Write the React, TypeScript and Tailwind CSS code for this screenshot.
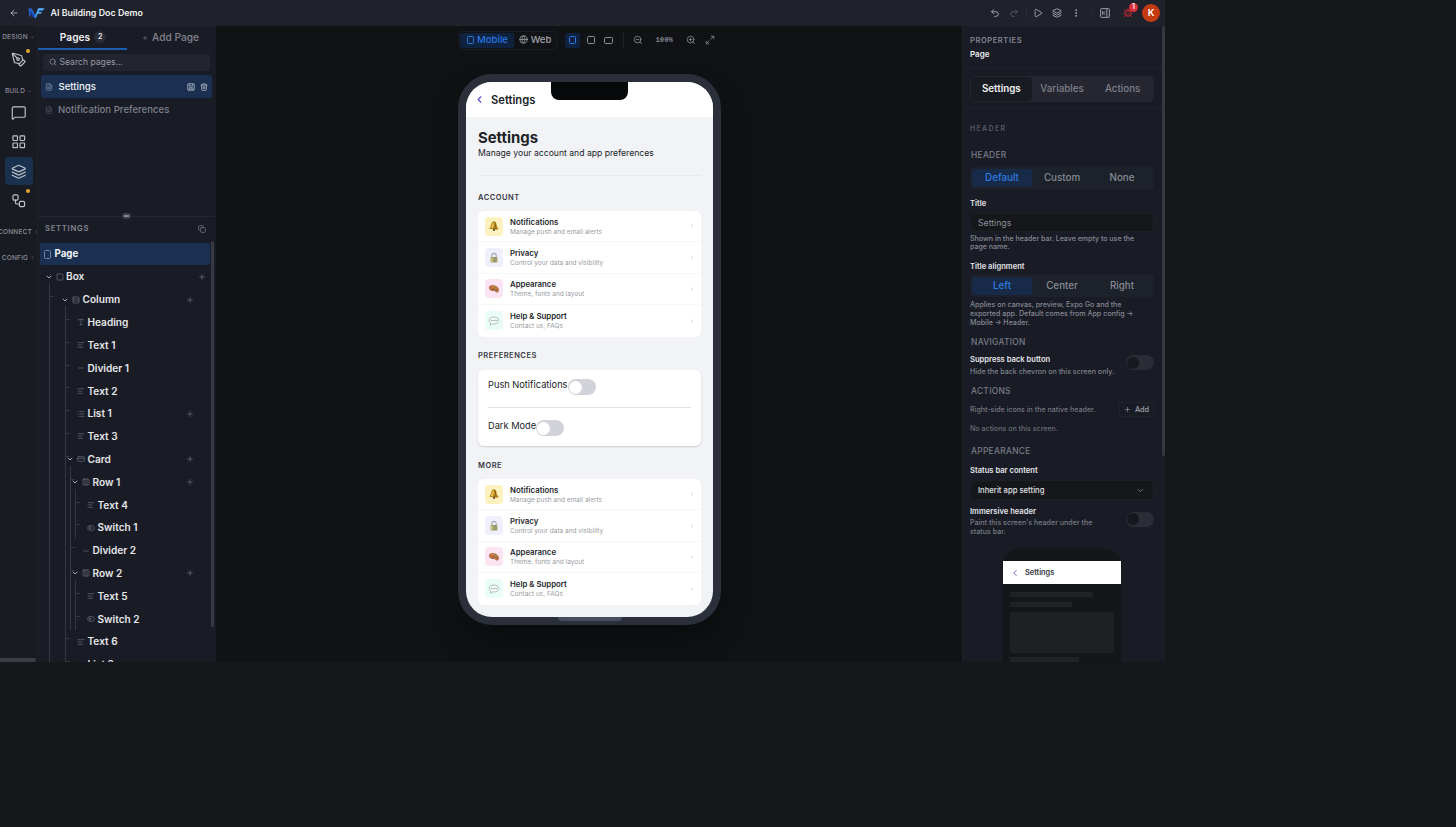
import type { ReactNode } from 'react';
import {
  AlignLeft,
  ArrowLeft,
  Bug,
  ChevronDown,
  ChevronLeft,
  ChevronRight,
  Columns3,
  Copy,
  CreditCard,
  EllipsisVertical,
  FileText,
  Globe,
  Layers,
  LayoutGrid,
  List,
  Maximize2,
  MessageSquare,
  Minus,
  PenTool,
  Play,
  Plus,
  Redo2,
  Rows3,
  Search,
  Square,
  ToggleLeft,
  Trash2,
  Type,
  Undo2,
  Workflow,
  ZoomIn,
  ZoomOut,
  type LucideIcon,
} from 'lucide-react';

type Node = {
  name: string;
  depth: number;
  icon: LucideIcon;
  open?: boolean;
  add?: boolean;
  guides: number[];
  tick?: number;
};

// Guides are the x offsets of the vertical lines that pass through a row
const nodes: Node[] = [
  { name: 'Box', depth: 0, icon: Square, open: true, add: true, guides: [] },
  { name: 'Column', depth: 1, icon: Rows3, open: true, add: true, guides: [11], tick: 11 },
  { name: 'Heading', depth: 2, icon: Type, guides: [11, 27], tick: 27 },
  { name: 'Text 1', depth: 2, icon: AlignLeft, guides: [11, 27], tick: 27 },
  { name: 'Divider 1', depth: 2, icon: Minus, guides: [11, 27], tick: 27 },
  { name: 'Text 2', depth: 2, icon: AlignLeft, guides: [11, 27], tick: 27 },
  { name: 'List 1', depth: 2, icon: List, add: true, guides: [11, 27], tick: 27 },
  { name: 'Text 3', depth: 2, icon: AlignLeft, guides: [11, 27], tick: 27 },
  { name: 'Card', depth: 2, icon: CreditCard, open: true, add: true, guides: [11, 27], tick: 27 },
  { name: 'Row 1', depth: 3, icon: Columns3, open: true, add: true, guides: [11, 27, 32], tick: 32 },
  { name: 'Text 4', depth: 4, icon: AlignLeft, guides: [11, 27, 32, 37], tick: 37 },
  { name: 'Switch 1', depth: 4, icon: ToggleLeft, guides: [11, 27, 32, 37], tick: 37 },
  { name: 'Divider 2', depth: 3, icon: Minus, guides: [11, 27, 32], tick: 32 },
  { name: 'Row 2', depth: 3, icon: Columns3, open: true, add: true, guides: [11, 27, 32], tick: 32 },
  { name: 'Text 5', depth: 4, icon: AlignLeft, guides: [11, 27, 32, 37], tick: 37 },
  { name: 'Switch 2', depth: 4, icon: ToggleLeft, guides: [11, 27, 32, 37], tick: 37 },
  { name: 'Text 6', depth: 2, icon: AlignLeft, guides: [11, 27], tick: 27 },
  { name: 'List 2', depth: 2, icon: List, add: true, guides: [11, 27], tick: 27 },
];

const indents = [6.5, 23, 28, 33, 38];

function TreeRow({ node }: { node: Node }) {
  const Icon = node.icon;
  return (
    <div
      className="relative flex h-[22.82px] shrink-0 items-center"
      style={{ paddingLeft: indents[node.depth] }}
    >
      {node.guides.map((x) => (
        <span key={x} className="absolute top-[-5px] bottom-0 w-px bg-[#343741]" style={{ left: x }} />
      ))}
      {node.tick && (
        <span className="absolute top-[8px] h-px w-[5px] bg-[#343741]" style={{ left: node.tick }} />
      )}
      <span className="relative flex w-[11px] shrink-0">
        {node.open && <ChevronDown size={8} strokeWidth={3} className="text-[#a3a7b0]" />}
      </span>
      <Icon size={8} strokeWidth={2} className="mr-[2.5px] shrink-0 text-[#6b6f7a]" />
      <span className="text-[10.1px] font-semibold text-[#e6e7ea]">{node.name}</span>
      {node.add && (
        <Plus
          size={8}
          className={`absolute text-[#74777f] ${node.depth === 0 ? 'left-[160px]' : 'left-[148px]'}`}
        />
      )}
    </div>
  );
}

function Logo() {
  return (
    <svg width="17" height="12" viewBox="0 0 17 12" fill="none">
      <path d="M.5 1.2H3.6L7.2 7.6 10.2 1.2H16.4L14.8 4H11L7.6 10.9H5.7L2.6 5.4V9.4H1.2Z" fill="#245fc4" />
      <path d="M2.6 3.6 6.8 10.9H5.2L2.6 6Z" fill="#123a9c" />
      <path d="M10.2 1.2H16.4L14.8 3.2H11.6L10.6 5H14L12.8 6.8H9.7L7.6 10.9H6.7Z" fill="#54a8ea" />
    </svg>
  );
}

function TopBar() {
  return (
    <header className="flex h-[25.5px] shrink-0 items-center bg-[#20222b]">
      <ArrowLeft size={10} className="ml-[9px] text-[#b9bcc4]" />
      <div className="ml-[9px]">
        <Logo />
      </div>
      <span className="ml-[5.5px] pb-px text-[8.9px] font-semibold text-[#eff0f3]">AI Building Doc Demo</span>
      <div className="ml-auto flex items-center text-[#b3b6be]">
        <Undo2 size={10} className="mr-[9px]" />
        <Redo2 size={10} className="mr-[7px] text-[#5d606a]" />
        <span className="mr-[6px] h-3 w-px bg-[#2a2d35]" />
        <Play size={10} className="mr-[9px]" />
        <Layers size={10} className="mr-[9px]" />
        <EllipsisVertical size={10} className="mr-[11px]" />
        <span className="mr-[7px] h-3 w-px bg-[#262932]" />
        <svg width="10" height="10" viewBox="0 0 24 24" fill="none" stroke="currentColor" strokeWidth="2" className="mr-[13px]">
          <rect x="1.5" y="1.5" width="21" height="21" rx="2" />
          <path d="M16.5 2v20M6.5 7v10M12.5 8l-4 4 4 4" />
        </svg>
        <div className="relative mr-[9px]">
          <Bug size={10} className="text-[#c42a34]" />
          <span className="absolute -top-[5px] left-[6px] flex h-[9px] w-[9px] items-center justify-center rounded-full bg-[#dc2f3c] text-[7px] font-semibold text-white">
            1
          </span>
        </div>
        <div className="mr-[5px] flex h-[18px] w-[18px] items-center justify-center rounded-full bg-[#c43b12] text-[9.6px] font-semibold text-white">
          K
        </div>
      </div>
    </header>
  );
}

function RailLabel({ children, closed = false }: { children: string; closed?: boolean }) {
  const Chevron = closed ? ChevronRight : ChevronDown;
  return (
    <div className="flex h-[10px] items-center justify-center gap-[2px] text-[6.5px] font-medium tracking-[0.2px] whitespace-nowrap text-[#8d9099]">
      {children}
      <Chevron size={5} className="shrink-0" />
    </div>
  );
}

function RailButton({ icon: Icon, active, dot }: { icon: LucideIcon; active?: boolean; dot?: boolean }) {
  return (
    <div
      className={`relative mx-auto flex h-[28px] w-[28px] shrink-0 items-center justify-center rounded-[4px] text-[#c0c3cb] ${active ? 'bg-[#19304e]' : ''}`}
    >
      <Icon size={15.5} strokeWidth={1.8} />
      {dot && <span className="absolute top-[2.5px] right-[2.5px] h-[4px] w-[4px] rounded-full bg-[#e3a62d]" />}
    </div>
  );
}

function Rail() {
  return (
    <div className="flex w-[38px] shrink-0 flex-col overflow-hidden border-r border-[#1d2026] bg-[#191b23]">
      <div className="mt-[7px]">
        <RailLabel>DESIGN</RailLabel>
      </div>
      <div className="mt-[3.5px]">
        <RailButton icon={PenTool} dot />
      </div>
      <div className="mt-[12px]">
        <RailLabel>BUILD</RailLabel>
      </div>
      <div className="mt-[3px] flex flex-col gap-[1.2px]">
        <RailButton icon={MessageSquare} />
        <RailButton icon={LayoutGrid} />
        <RailButton icon={Layers} active />
        <RailButton icon={Workflow} dot />
      </div>
      <div className="mt-[12px]">
        <RailLabel closed>CONNECT</RailLabel>
      </div>
      <div className="mt-[16px]">
        <RailLabel closed>CONFIG</RailLabel>
      </div>
      <div className="mt-auto h-[4px] w-[36px] rounded-r-full bg-[#3b3e47]" />
    </div>
  );
}

function SaveIcon() {
  return (
    <svg width="8" height="8" viewBox="0 0 16 16" fill="none" stroke="#a9b2c2" strokeWidth="1.7" className="mr-[5px] ml-auto">
      <rect x="1.5" y="1.5" width="13" height="13" rx="1" />
      <path d="M4.5 2v4h7V2M4.5 14V9.5h7V14M8 9.500V14" />
    </svg>
  );
}

function PagesPanel() {
  return (
    <div className="flex w-[178px] shrink-0 flex-col border-r border-[#191b22] bg-[#191b25]">
      <div className="flex h-[24px] shrink-0 text-[10.2px]">
        <div className="flex w-[89px] items-center justify-center gap-[4px] border-b-2 border-[#1a5cb4] pt-[1px] pl-[1px] font-semibold text-[#eceef2]">
          <span>Pages</span>
          <span className="flex h-[12px] w-[12px] items-center justify-center rounded-full bg-[#292c36] text-[7px]">2</span>
        </div>
        <div className="flex flex-1 items-center justify-center gap-[4px] pr-[1px] font-medium text-[#80838c]">
          <Plus size={6} />
          Add Page
        </div>
      </div>
      <div className="mx-[5px] mt-[4px] flex h-[17px] shrink-0 items-center gap-[3px] rounded-[3px] bg-[#22252f] pl-[5.5px] text-[8.6px] text-[#969aa3]">
        <Search size={8} />
        Search pages...
      </div>
      <div className="mx-[3px] mt-[4.5px] flex h-[23px] shrink-0 items-center rounded-[3px] bg-[#1b3050] pr-[4px] pl-[4px]">
        <FileText size={8} className="mr-[5.5px] text-[#8492aa]" />
        <span className="text-[9.6px] font-medium text-[#f2f4f7]">Settings</span>
        <SaveIcon />
        <Trash2 size={8} strokeWidth={2.5} className="text-[#a9b2c2]" />
      </div>
      <div className="mx-[3px] flex h-[23px] shrink-0 items-center pl-[4px]">
        <FileText size={8} className="mr-[5px] text-[#555963]" />
        <span className="text-[9.6px] font-medium text-[#7e818b]">Notification Preferences</span>
      </div>
      <div className="mt-[94.5px] flex h-px shrink-0 items-center justify-center bg-[#252831]">
        <span className="flex h-[6px] w-[9px] items-center justify-center rounded-full bg-[#3a3e48]">
          <span className="h-[2px] w-[5px] bg-[#858994]" />
        </span>
      </div>
      <div className="flex h-[24px] shrink-0 items-center pr-[9px] pl-[7px] text-[7.7px] font-semibold tracking-[0.7px] text-[#82858f]">
        SETTINGS
        <Copy size={8} className="ml-auto" />
      </div>
      <div className="flex min-h-0 flex-1">
        <div className="flex w-[173px] shrink-0 flex-col overflow-hidden pt-[2.5px]">
          <div className="mr-[1px] ml-[2px] flex h-[22px] shrink-0 items-center rounded-[2px] bg-[#1b3050] pl-[4px]">
            <svg width="7" height="9" viewBox="0 0 7 9" fill="none" stroke="#6883a5" className="mr-[3.5px]">
              <rect x=".5" y=".5" width="6" height="8" rx="1" />
            </svg>
            <span className="pt-px text-[9.7px] font-bold text-[#f2f4f7]">Page</span>
          </div>
          <div className="pt-[0.4px]">
            {nodes.map((node) => (
              <TreeRow key={node.name} node={node} />
            ))}
          </div>
        </div>
        <div className="h-[386px] w-[3px] rounded-full bg-[#373a43]" />
      </div>
    </div>
  );
}

function Device({ w, h, color = '#8c909a' }: { w: number; h: number; color?: string }) {
  return (
    <svg width={w} height={h} fill="none" stroke={color}>
      <rect x=".5" y=".5" width={w - 1} height={h - 1} rx="1" />
    </svg>
  );
}

function CanvasToolbar() {
  return (
    <div className="absolute top-[5px] left-[243px] flex h-[19px] items-center text-[9.6px] font-medium text-[#858993]">
      <div className="flex h-[19px] items-center rounded-[3px] border border-[#191c20]">
        <div className="flex h-[15px] w-[54px] items-center justify-center gap-[3px] rounded-[3px] bg-[#0f2240] pl-[1px] text-[#2577e2]">
          <Device w={7} h={8} color="#2577e2" />
          Mobile
        </div>
        <div className="flex w-[42px] items-center justify-center gap-[3px] text-[#a2a5ad]">
          <Globe size={9} />
          Web
        </div>
      </div>
      <div className="ml-[8px] flex h-[15px] w-[15px] items-center justify-center rounded-[3px] bg-[#0f2240]">
        <Device w={7} h={8} color="#2577e2" />
      </div>
      <span className="ml-[6.5px] flex">
        <Device w={8} h={8} />
      </span>
      <span className="ml-[9px] flex">
        <Device w={9} h={7} />
      </span>
      <span className="ml-[10px] h-[17px] w-px bg-[#202327]" />
      <ZoomOut size={10} className="ml-[9px]" />
      <span className="mx-[13px] font-['Liberation_Mono'] text-[7.2px] font-bold">100%</span>
      <ZoomIn size={10} />
      <Maximize2 size={10} className="ml-[9px]" />
    </div>
  );
}

function ItemGlyph({ kind }: { kind: string }) {
  if (kind === 'bell') {
    return (
      <svg width="12" height="12" viewBox="0 0 12 12">
        <path d="M5.5 1.2c1.7-.3 2.7 1 3 2.8.2 1.6.4 3.2 1.9 4.2L10 9.7 1.3 8.8l.2-1.1C3.6 6.6 2.4 2 5.5 1.2Z" fill="#b98a1c" />
        <path d="M5.1 2.5c1.2 0 .6 3.8-.3 5.5l-2-.2c1.5-2 1-4.6 2.3-5.3Z" fill="#edc755" />
        <path d="M7 2.5 8 9" stroke="#8b6315" />
        <circle cx="6" cy="9.8" r="1.2" fill="#6b542b" />
      </svg>
    );
  }
  if (kind === 'lock') {
    return (
      <svg width="12" height="12" viewBox="0 0 12 12">
        <path d="M3.8 5V3.6a2.2 2.2 0 0 1 4.4 0V5" fill="none" stroke="#a4abae" strokeWidth="1.1" />
        <rect x="2.6" y="5" width="6.8" height="5.5" rx=".8" fill="#a59d61" />
        <path d="M3 6h2v4H3z" fill="#c4bd80" />
        <path d="M7 5.5v4.5" stroke="#85908a" />
      </svg>
    );
  }
  if (kind === 'palette') {
    return (
      <svg width="12" height="12" viewBox="0 0 12 12">
        <path d="M.9 4.5C1.3 2 4.8 1.4 7.2 2.6c2.3 1.1 3.9 2.8 3.8 4.6-.2 2.3-2.5 3-3.4 1.7-.8-1-2-.3-3.5-.8C2.2 7.5.7 6.2.9 4.5Z" fill="#b77443" />
        <circle cx="3" cy="4.3" r=".9" fill="#db6a48" />
        <circle cx="5.2" cy="3.7" r=".8" fill="#d3a23b" />
        <circle cx="7.7" cy="4.9" r=".9" fill="#8f8c51" />
        <circle cx="9.3" cy="7" r=".8" fill="#8b6659" />
        <circle cx="5.3" cy="6.4" r=".9" fill="#8e5540" />
      </svg>
    );
  }
  return (
    <svg width="12" height="12" viewBox="0 0 12 12">
      <path d="M6 2c2.7 0 4.7 1.5 4.7 3.5S8.7 9 6 9c-.6 0-1.1 0-1.6-.2C3.7 9.8 2.8 10 2 10c.5-.5.8-1.1.7-1.8C1.7 7.6 1.2 6.7 1.2 5.5 1.2 3.5 3.3 2 6 2Z" fill="#f2f7f6" stroke="#94aaa6" strokeWidth=".7" />
      <path d="M3.5 5.5h.9M5.6 5.5h.9M7.7 5.5h.9" stroke="#566d69" strokeWidth=".9" />
    </svg>
  );
}

const settingsItems = [
  { title: 'Notifications', text: 'Manage push and email alerts', kind: 'bell', tint: 'bg-[#fdf2bf]' },
  { title: 'Privacy', text: 'Control your data and visibility', kind: 'lock', tint: 'bg-[#efeffe]' },
  { title: 'Appearance', text: 'Theme, fonts and layout', kind: 'palette', tint: 'bg-[#fce4f3]' },
  { title: 'Help & Support', text: 'Contact us, FAQs', kind: 'chat', tint: 'bg-[#e9fcf5]' },
];

function SettingsList() {
  return (
    <div className="h-[125.5px] overflow-hidden rounded-[6px] bg-white">
      {settingsItems.map((item) => (
        <div key={item.title} className="flex h-[31.4px] items-center border-b border-[#f6f7f8] px-[7px] last:border-b-0">
          <div className={`flex h-[19px] w-[18px] items-center justify-center rounded-[4px] ${item.tint}`}>
            <ItemGlyph kind={item.kind} />
          </div>
          <div className="ml-[7px] pt-[1px]">
            <div className="text-[7.8px] leading-[10px] font-semibold text-[#25272c]">{item.title}</div>
            <div className="pt-[1px] text-[6.5px] leading-[9px] text-[#989ba3]">{item.text}</div>
          </div>
          <ChevronRight size={6} className="mr-[-1.5px] ml-auto text-[#b0b4bd]" />
        </div>
      ))}
    </div>
  );
}

function PhoneSwitch() {
  return (
    <span className="mt-[1.5px] flex h-[16px] w-[28px] items-center rounded-full bg-[#d1d3d9] p-[1px]">
      <span className="h-[13px] w-[13px] rounded-full bg-white" />
    </span>
  );
}

function SectionTitle({ children }: { children: string }) {
  return <div className="h-[12px] text-[7.5px] leading-[12px] font-semibold tracking-[0.5px] text-[#35383f]">{children}</div>;
}

function Phone() {
  return (
    <div className="absolute top-[48.5px] left-[242px] h-[551px] w-[262.5px] rounded-[34px] border-[8px] border-[#2a2f3a] bg-[#2a2f3a] shadow-[0_16px_30px_rgba(0,0,0,0.35)]">
      <div className="h-full overflow-hidden rounded-[26px] bg-[#f2f3f7] text-[#202227]">
        <div className="flex h-[35px] items-center bg-white pl-[8px]">
          <ChevronLeft size={11} strokeWidth={2.5} className="text-[#5a50c4]" />
          <span className="ml-[6px] pt-[1px] text-[11.2px] font-semibold">Settings</span>
        </div>
        <div className="px-[12px]">
          <h1 className="pt-[12px] text-[14.9px] leading-[18px] font-bold">Settings</h1>
          <p className="text-[8.65px] leading-[12px]">Manage your account and app preferences</p>
          <div className="mt-[16px] h-px bg-[#e8eaee]" />
          <div className="mt-[16px] mb-[7px]">
            <SectionTitle>ACCOUNT</SectionTitle>
          </div>
          <SettingsList />
          <div className="mt-[13.5px] mb-[7.5px]">
            <SectionTitle>PREFERENCES</SectionTitle>
          </div>
          <div className="h-[76.5px] rounded-[6px] bg-white px-[10px] pt-[8px] text-[9.25px] leading-[14px] shadow-[0_1px_2px_rgba(0,0,0,0.15)]">
            <div className="flex h-[29px]">
              Push Notifications
              <PhoneSwitch />
            </div>
            <div className="mb-[11px] h-px bg-[#dfe1e5]" />
            <div className="flex">
              Dark Mode
              <PhoneSwitch />
            </div>
          </div>
          <div className="mt-[13.5px] mb-[7.5px]">
            <SectionTitle>MORE</SectionTitle>
          </div>
          <SettingsList />
        </div>
      </div>
      <div className="absolute top-0 left-[85px] h-[18px] w-[76.5px] rounded-b-[8px] bg-[#08090b]" />
      <div className="absolute bottom-[-4px] left-[92px] h-[4px] w-[64px] rounded-b-full bg-[#484d61]" />
    </div>
  );
}

function Segmented({ options }: { options: string[] }) {
  return (
    <div className="flex h-[22px] items-center rounded-[3px] bg-[#1c212a] p-[2px] text-[9.8px] font-medium text-[#868a93]">
      {options.map((option, i) => (
        <span
          key={option}
          className={`flex h-full flex-1 items-center justify-center rounded-[3px] pt-px ${i === 0 ? 'bg-[#172a48] text-[#2f7de0]' : ''}`}
        >
          {option}
        </span>
      ))}
    </div>
  );
}

function GroupTitle({ children }: { children: string }) {
  return (
    <div className="h-[13px] pt-[0.3px] pl-[1px] text-[8.4px] leading-[13px] font-medium tracking-[0.3px] text-[#7b7e88]">
      {children}
    </div>
  );
}

function Label({ children }: { children: ReactNode }) {
  return <div className="h-[12px] pt-[0.7px] text-[7.6px] leading-[12px] font-semibold text-[#e3e5e9]">{children}</div>;
}

function DarkSwitch() {
  return (
    <span className="flex h-[15px] w-[28px] shrink-0 items-center rounded-full bg-[#2a2c36] p-[1px]">
      <span className="h-[12px] w-[12px] rounded-full bg-[#17181d]" />
    </span>
  );
}

function HeaderPreview() {
  return (
    <div className="mx-auto mt-[12px] h-[160px] w-[120px] rounded-t-[18px] border border-[#191a1f] bg-[#15161a] pt-[12px]">
      <div className="flex h-[23px] items-center bg-white pl-[7px]">
        <ChevronLeft size={10} className="text-[#5a50c4]" />
        <span className="ml-[5px] text-[7.4px] font-semibold text-[#33353b]">Settings</span>
      </div>
      <div className="px-[7px] pt-[8px]">
        <div className="h-[5px] w-[83px] rounded-[1px] bg-[#202226]" />
        <div className="mt-[5px] h-[5px] w-[62px] rounded-[1px] bg-[#202226]" />
        <div className="mt-[5px] h-[41px] rounded-[2px] bg-[#1e2024]" />
        <div className="mt-[4px] h-[5px] w-[69px] rounded-[1px] bg-[#202226]" />
      </div>
    </div>
  );
}

function PropertiesPanel() {
  return (
    <aside className="relative h-full w-[203px] shrink-0 overflow-hidden border-l border-[#1e2127] bg-[#191b25]">
      <div className="h-[42.5px] border-b border-[#20232c] pt-[9px] pl-[7px]">
        <div className="text-[7.5px] leading-[12px] font-semibold tracking-[0.6px] text-[#858993]">PROPERTIES</div>
        <div className="mt-[1.5px] text-[8px] leading-[12px] font-semibold text-[#f0f1f4]">Page</div>
      </div>
      <div className="h-[41px] border-b border-[#20232c] pt-[7.5px] pr-[11px] pl-[7px]">
        <div className="flex h-[26px] rounded-[5px] bg-[#252630] p-[1px] text-[9.8px] font-medium text-[#7e818c]">
          <span className="flex flex-1 items-center justify-center rounded-[4px] bg-[#191b22] pt-px font-semibold text-[#f1f2f4]">
            Settings
          </span>
          <span className="flex flex-1 items-center justify-center pt-px">Variables</span>
          <span className="flex flex-1 items-center justify-center pt-px">Actions</span>
        </div>
      </div>
      <div className="pr-[11px] pl-[7px]">
        <div className="mt-[13.5px] mb-[14.5px] text-[6.9px] leading-[12px] font-semibold tracking-[1.4px] text-[#565a65]">
          HEADER
        </div>
        <GroupTitle>HEADER</GroupTitle>
        <div className="mt-[5px] mb-[8px]">
          <Segmented options={['Default', 'Custom', 'None']} />
        </div>
        <Label>Title</Label>
        <div className="mt-[4px] flex h-[19px] items-center rounded-[3px] border border-[#1d1f25] bg-[#15171b] pt-px pl-[7px] text-[8.7px] text-[#8a8e97]">
          Settings
        </div>
        <p className="mt-[3px] mb-[9px] text-[7.05px] leading-[8px] font-medium text-[#858993]">
          Shown in the header bar. Leave empty to use the
          <br />
          page name.
        </p>
        <div className="pt-[0.5px]">
          <Label>Title alignment</Label>
        </div>
        <div className="mt-[2.5px]">
          <Segmented options={['Left', 'Center', 'Right']} />
        </div>
        <p className="mt-[3px] mb-[9px] text-[7.08px] leading-[9px] font-medium text-[#858993]">
          Applies on canvas, preview, Expo Go and the
          <br />
          exported app. Default comes from App config →
          <br />
          Mobile → Header.
        </p>
        <GroupTitle>NAVIGATION</GroupTitle>
        <div className="mt-[4px] mb-[7px] flex h-[25px] justify-between">
          <div>
            <Label>Suppress back button</Label>
            <p className="pt-[0.5px] text-[7.1px] leading-[11px] font-medium text-[#7e828c]">Hide the back chevron on this screen only.</p>
          </div>
          <div className="pt-[2px]">
            <DarkSwitch />
          </div>
        </div>
        <GroupTitle>ACTIONS</GroupTitle>
        <div className="mt-[4px] flex h-[15px] items-center justify-between text-[7.1px] font-medium text-[#747882]">
          <span className="pt-px">Right-side icons in the native header.</span>
          <span className="flex h-[15px] w-[35px] items-center justify-center gap-[4px] rounded-[3px] border border-[#20232b] text-[7.3px] font-medium text-[#a0a3ac]">
            <Plus size={7} />
            Add
          </span>
        </div>
        <p className="mt-[7px] mb-[12px] text-[7.1px] leading-[9px] font-medium text-[#686c76]">No actions on this screen.</p>
        <GroupTitle>APPEARANCE</GroupTitle>
        <div className="mt-[6.5px]">
          <Label>Status bar content</Label>
        </div>
        <div className="mt-[3.5px] flex h-[20px] items-center justify-between rounded-[3px] border border-[#1d1f25] bg-[#15171b] pr-[8px] pl-[7px] text-[7.7px] font-medium text-[#e0e2e6]">
          <span className="pt-px">Inherit app setting</span>
          <ChevronDown size={9} className="text-[#858993]" />
        </div>
        <div className="mt-[5px] flex justify-between">
          <div>
            <Label>Immersive header</Label>
            <p className="pt-[1px] text-[7.1px] leading-[9px] font-medium text-[#777b85]">
              Paint this screen's header under the
              <br />
              status bar.
            </p>
          </div>
          <div className="pt-[6.5px]">
            <DarkSwitch />
          </div>
        </div>
        <HeaderPreview />
      </div>
      <div className="absolute top-0 right-0 h-[430px] w-[3px] rounded-full bg-[#333842]" />
    </aside>
  );
}

export default function App() {
  return (
    <div className="h-[827px] w-[1456px] overflow-hidden bg-[#14181b] font-['Inter',sans-serif] leading-tight">
      <div className="flex h-[662px] w-[1165px] flex-col overflow-hidden">
        <TopBar />
        <div className="flex min-h-0 flex-1">
          <Rail />
          <PagesPanel />
          <main className="relative flex-1 overflow-hidden bg-[#101215]">
            <CanvasToolbar />
            <Phone />
          </main>
          <PropertiesPanel />
        </div>
      </div>
    </div>
  );
}
